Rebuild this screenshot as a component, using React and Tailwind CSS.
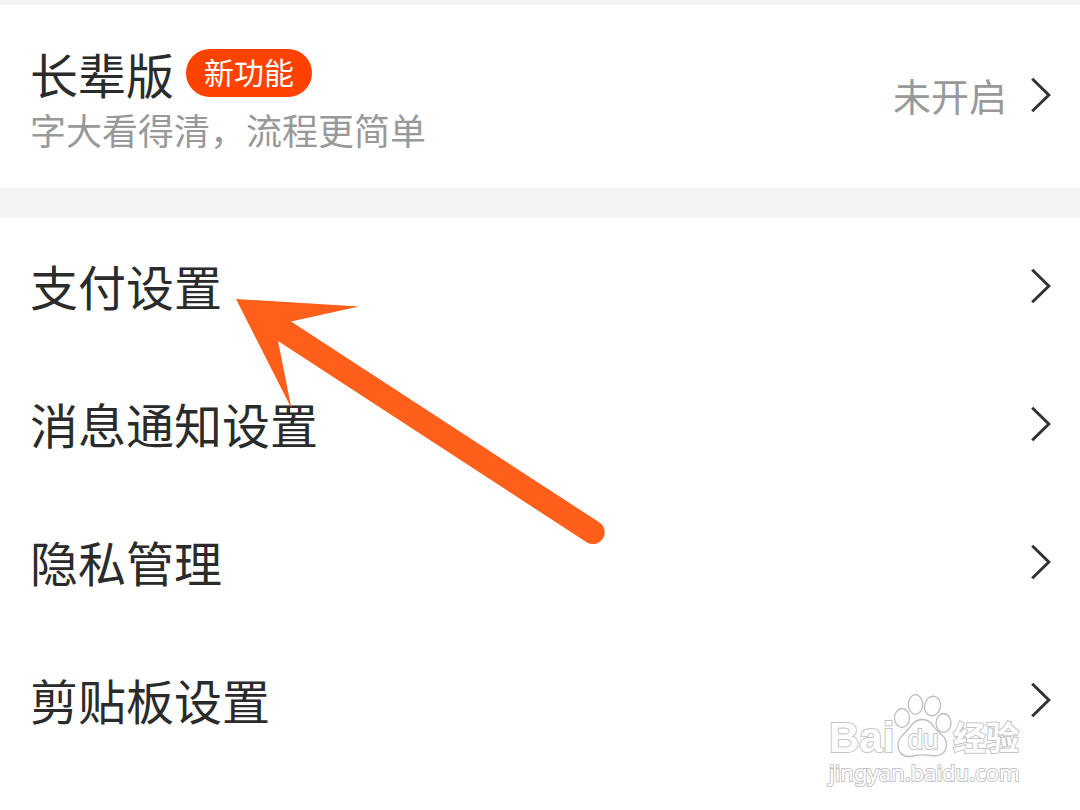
import React from 'react';

const menuItems = [
  { id: 'payment', label: '支付设置' },
  { id: 'notification', label: '消息通知设置' },
  { id: 'privacy', label: '隐私管理' },
  { id: 'clipboard', label: '剪贴板设置' },
];

const Chevron = () => (
  <svg className="w-5 h-9 shrink-0" viewBox="0 0 20 36" fill="none" stroke="#333333" strokeWidth="3" aria-hidden="true">
    <path d="M1.2 1.8 L17.8 18 L1.2 34.2" />
  </svg>
);

const Arrow = () => (
  <svg
    className="absolute left-[236px] top-[81px] w-[370px] h-[246px] pointer-events-none"
    viewBox="0 0 370 246"
    fill="#ff5f1a"
    aria-hidden="true"
  >
    <path d="M0 0 L123 7.5 L55 22.5 L363.5 223.5 A11.8 11.8 0 0 1 351 243.5 L42 42 L55.5 109.5 Z" />
  </svg>
);

const outline = '[-webkit-text-stroke:2px_#c4c4c4] [paint-order:stroke_fill] text-white';

const Watermark = () => (
  <div className="absolute right-[61px] bottom-6 w-[190px] pointer-events-none">
    <div className="flex items-end justify-between h-16">
      <span className={`font-['Liberation_Sans',sans-serif] font-bold text-[42px] leading-10 ${outline}`}>Bai</span>
      <div className="absolute left-16 top-0 w-[60px] h-16">
        <svg viewBox="0 0 60 64" fill="#ffffff" stroke="#bdbdbd" strokeWidth="1.3" aria-hidden="true">
          <ellipse cx="9" cy="24" rx="7.5" ry="9.5" />
          <ellipse cx="22.5" cy="10.5" rx="7.2" ry="9.8" />
          <ellipse cx="39.5" cy="12" rx="8" ry="9.8" transform="rotate(12 39.5 12)" />
          <ellipse cx="50.5" cy="29" rx="7.5" ry="9.5" />
          <path d="M29.5 25.5 C35 25.5 38 28 41 33 C44 38 54 42 53.5 51 C53 60 46 63 38 61.5 C32 60.5 26 60.5 20 62 C11 64 5 60 5 51 C5 43 12 40 17 33 C20 28 24 25.5 29.5 25.5 Z" />
        </svg>
        <span className={`absolute inset-x-0 top-8 text-center font-['Liberation_Sans',sans-serif] text-[28px] leading-7 ${outline}`}>du</span>
      </div>
      <span className={`font-['Noto_Sans_CJK_SC',sans-serif] font-bold text-[33px] leading-11 ${outline}`}>经验</span>
    </div>
    <div className={`whitespace-nowrap font-['Noto_Sans',sans-serif] text-[22px] leading-7 ${outline}`}>jingyan.baidu.com</div>
  </div>
);

const App = () => {
  return (
    <main className="relative min-h-screen bg-white font-['Noto_Sans_CJK_SC',sans-serif] text-[#2b2b2b]">
      <div className="h-[5px] bg-[#f3f3f3]" />

      <button type="button" className="flex w-full min-h-[183px] items-center pl-[30px] pr-[29px] pb-1 text-left">
        <div className="flex-1 pt-3">
          <div className="flex items-center gap-3 text-5xl leading-14">
            <span>长辈版</span>
            <span className="rounded-full bg-[#ff4200] px-[18px] pb-1 text-[30px] leading-11 text-white">新功能</span>
          </div>
          <p className="text-4xl leading-14 text-[#999999]">字大看得清，流程更简单</p>
        </div>
        <span className="mr-6 text-[38px] leading-14 text-[#999999]">未开启</span>
        <Chevron />
      </button>

      <div className="h-[30px] bg-[#f3f3f3]" />

      <div className="relative">
        {menuItems.map((item) => (
          <button key={item.id} type="button" className="flex w-full h-[138px] items-center justify-between pl-[30px] pr-[29px] pb-[2px] text-left text-5xl leading-14">
            <span className="pb-[2px]">{item.label}</span>
            <Chevron />
          </button>
        ))}
        <Arrow />
      </div>

      <Watermark />
    </main>
  );
};

export default App;
